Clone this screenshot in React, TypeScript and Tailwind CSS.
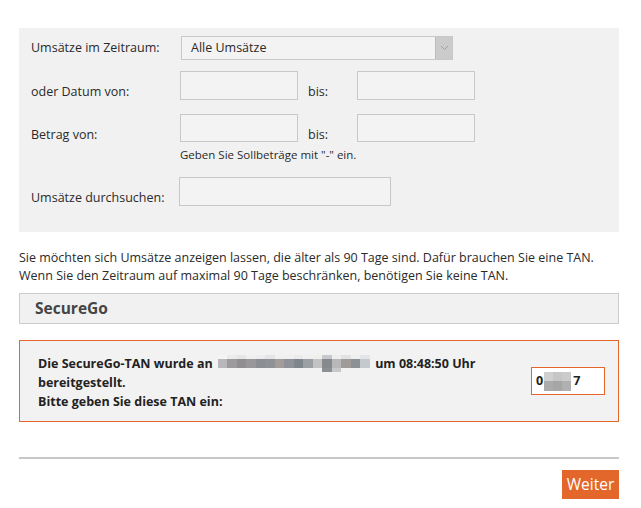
import React from 'react';

const font = { fontFamily: '"Open Sans", "Noto Sans", Arial, sans-serif' };

// pixelated redaction over the phone number
const mosaic: [string, string, string][] = [
  ['#f4f4f4', '#b8b8bc', '#f2f2f2'],
  ['#ececec', '#9c9a9c', '#f2f2f2'],
  ['#e6e6e6', '#8f8f92', '#f2f2f2'],
  ['#f0f0f0', '#9a979a', '#f2f2f2'],
  ['#ededed', '#8b8f93', '#f2f2f2'],
  ['#e4e4e6', '#8f9295', '#f2f2f2'],
  ['#f0f0f0', '#a39c98', '#f2f2f2'],
  ['#f0f0f0', '#8f9399', '#f2f2f2'],
  ['#ebebeb', '#7f878c', '#f2f2f2'],
  ['#f0f0f0', '#9aa0a4', '#f2f2f2'],
  ['#f1efea', '#c3c3c3', '#f2f2f2'],
  ['#c6c8cc', '#848a8e', '#8c9094'],
  ['#eeeeee', '#b8b8b8', '#c8c8c8'],
  ['#e2e2e2', '#a09a99', '#f2f2f2'],
  ['#f0f0f0', '#8c9196', '#f2f2f2'],
  ['#e2e6ea', '#c5c8cc', '#f2f2f2'],
];

function Field({ w = 'w-[118px]', h = 'h-[29px]' }: { w?: string; h?: string }) {
  return <div className={`${w} ${h} border border-[#c8c8c8] bg-[#f3f3f3]`} />;
}

export default function App() {
  return (
    <div className="w-[641px] h-[508px] bg-white text-[#2a2a2a]" style={font}>
      <div className="ml-[19px] w-[600px] pt-[28px]">
        {/* Filter panel */}
        <div className="bg-[#f1f1f1] pl-[12px] pt-[8px] pb-[26px] text-[12.5px]">
          <div className="flex items-center">
            <div className="w-[150px]">Umsätze im Zeitraum:</div>
            <div className="flex w-[272px] h-[24px] border border-[#c8c8c8] bg-[#f3f3f3]">
              <div className="flex-1 pl-[9px] leading-[22px]">Alle Umsätze</div>
              <div className="w-[17px] bg-[#cbcbcb] border-l border-[#bdbdbd] flex items-center justify-center">
                <svg width="9" height="6" viewBox="0 0 9 6">
                  <path d="M1 1l3.5 3.5L8 1" fill="none" stroke="#a0a0a0" strokeWidth="1" />
                </svg>
              </div>
            </div>
          </div>

          <div className="flex items-center mt-[11px]">
            <div className="w-[149px] translate-y-[7px]">oder Datum von:</div>
            <Field />
            <div className="w-[59px] pl-[10px] translate-y-[7px]">bis:</div>
            <Field />
          </div>

          <div className="flex items-center mt-[14px]">
            <div className="w-[149px] translate-y-[7px]">Betrag von:</div>
            <Field h="h-[28px]" />
            <div className="w-[59px] pl-[10px] translate-y-[7px]">bis:</div>
            <Field h="h-[28px]" />
          </div>

          <div className="ml-[149px] mt-[5px] text-[11.5px] leading-[16px]">
            Geben Sie Sollbeträge mit "-" ein.
          </div>

          <div className="flex items-center mt-[14px]">
            <div className="w-[148px] translate-y-[7px]">Umsätze durchsuchen:</div>
            <Field w="w-[212px]" />
          </div>
        </div>

        <p className="mt-[17px] text-[12.5px] leading-[18px]">
          Sie möchten sich Umsätze anzeigen lassen, die älter als 90 Tage sind. Dafür brauchen Sie eine TAN.
          <br />
          Wenn Sie den Zeitraum auf maximal 90 Tage beschränken, benötigen Sie keine TAN.
        </p>

        <div className="mt-[8px] h-[31px] border border-[#cccccc] bg-[#f1f1f1] pl-[15px] flex items-center text-[15.5px] font-bold text-[#444]">
          SecureGo
        </div>

        {/* TAN box */}
        <div className="mt-[16px] h-[82px] border border-[#e5662b] bg-[#f2f2f2] pl-[18px] pr-[13px] flex items-center justify-between">
          <div className="text-[12.5px] font-bold leading-[19px] text-[#222] pt-[2px]">
            <div className="flex items-center">
              <span>Die SecureGo-TAN wurde an&nbsp;</span>
              <span className="flex mx-[2px]">
                {mosaic.map((c, i) => (
                  <span key={i} className="flex flex-col w-[9.5px]">
                    <span className="h-[4px]" style={{ background: c[0] }} />
                    <span className="h-[9px]" style={{ background: c[1] }} />
                    <span className="h-[4px]" style={{ background: c[2] }} />
                  </span>
                ))}
              </span>
              <span>&nbsp;um 08:48:50 Uhr</span>
            </div>
            <div>bereitgestellt.</div>
            <div>Bitte geben Sie diese TAN ein:</div>
          </div>
          <div className="w-[74px] h-[28px] border border-[#e5662b] bg-white flex items-center pl-[4px] text-[12.5px] font-bold text-[#222]">
            <span>0</span>
            <span className="flex flex-col ml-[1px]">
              <span className="flex">
                <span className="w-[9px] h-[9px] bg-[#d0d0d0]" />
                <span className="w-[9px] h-[9px] bg-[#c6c6c6]" />
                <span className="w-[9px] h-[9px] bg-[#cbcbcb]" />
              </span>
              <span className="flex">
                <span className="w-[9px] h-[10px] bg-[#ababab]" />
                <span className="w-[9px] h-[10px] bg-[#a6a6a6]" />
                <span className="w-[9px] h-[10px] bg-[#b0b0b0]" />
              </span>
            </span>
            <span className="ml-[2px]">7</span>
          </div>
        </div>

        <div className="mt-[35px] h-[2px] bg-[#c8c8c8]" />

        <div className="flex justify-end mt-[11px]">
          <button className="h-[29px] w-[57px] bg-[#e3662b] text-white text-[15.5px] flex items-center justify-center">
            Weiter
          </button>
        </div>
      </div>
    </div>
  );
}
